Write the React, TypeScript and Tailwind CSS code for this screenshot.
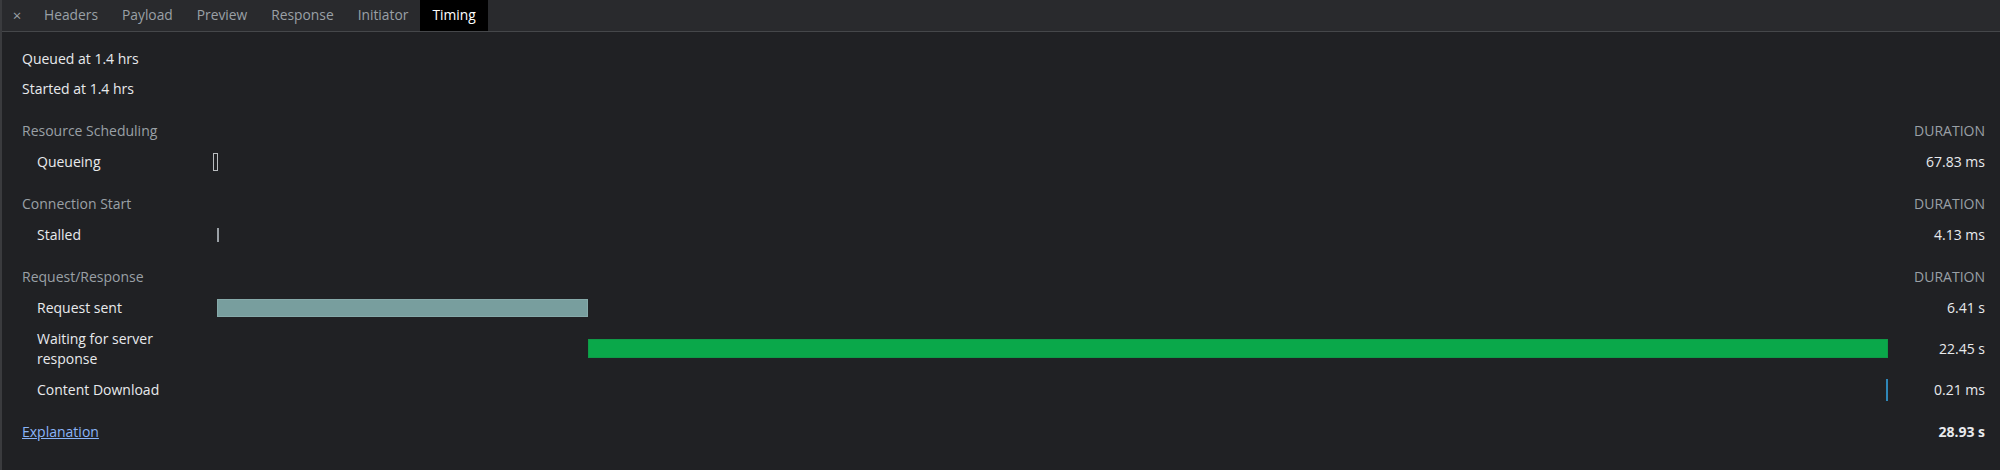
import React from "react";

const TRACK = 1675;
const TOTAL = 28.93;
const px = (s: number) => (s / TOTAL) * TRACK;

type Row = {
  label: React.ReactNode;
  start: number;
  dur: number;
  value: string;
  kind: "queue" | "stall" | "sent" | "wait" | "dl";
  tall?: boolean;
};

const sections: { title: string; rows: Row[] }[] = [
  {
    title: "Resource Scheduling",
    rows: [{ label: "Queueing", start: 0, dur: 0.06783, value: "67.83 ms", kind: "queue" }],
  },
  {
    title: "Connection Start",
    rows: [{ label: "Stalled", start: 0.06783, dur: 0.00413, value: "4.13 ms", kind: "stall" }],
  },
  {
    title: "Request/Response",
    rows: [
      { label: "Request sent", start: 0.072, dur: 6.41, value: "6.41 s", kind: "sent" },
      {
        label: (
          <>
            Waiting for server
            <br />
            response
          </>
        ),
        start: 6.482,
        dur: 22.45,
        value: "22.45 s",
        kind: "wait",
        tall: true,
      },
      { label: "Content Download", start: 28.93, dur: 0.00021, value: "0.21 ms", kind: "dl" },
    ],
  },
];

function Bar({ row }: { row: Row }) {
  const left = px(row.start);
  if (row.kind === "queue") {
    return (
      <div
        className="h-[18px] w-[5px] border border-[#b9bcbf] bg-[#202124]"
        style={{ marginLeft: left }}
      />
    );
  }
  if (row.kind === "stall") {
    return <div className="h-[14px] w-[2px] bg-[#9aa0a6]" style={{ marginLeft: left }} />;
  }
  if (row.kind === "dl") {
    return <div className="h-[22px] w-[2px] bg-[#2f87b8]" style={{ marginLeft: left - 2 }} />;
  }
  const w = px(row.dur);
  return (
    <div
      className={
        row.kind === "sent"
          ? "h-[18px] bg-[#789e9e] border border-[#86aaaa]"
          : "h-[19px] bg-[#0aa84a] border border-[#0f9a47]"
      }
      style={{ marginLeft: left, width: w }}
    />
  );
}

export default function App() {
  const tabs = ["Headers", "Payload", "Preview", "Response", "Initiator", "Timing"];
  return (
    <div
      className="w-[2000px] h-[470px] bg-[#202124] text-[#e8eaed] text-[14px] overflow-hidden border-l-2 border-[#3a3b3e]"
      style={{ fontFamily: '"Open Sans", "Noto Sans", sans-serif' }}
    >
      <div className="flex h-[32px] items-stretch bg-[#292a2d] border-b border-[#45474a] text-[13.8px]">
        <div className="w-[30px] flex items-center justify-center text-[#9aa0a6] text-[15px]">
          ×
        </div>
        {tabs.map((t) => (
          <div
            key={t}
            className={
              t === "Timing"
                ? "px-[12px] flex items-center bg-black text-white"
                : "px-[12px] flex items-center text-[#9aa0a6]"
            }
          >
            {t}
          </div>
        ))}
      </div>

      <div className="pt-[12px] pl-[20px] pr-[15px] leading-[20px]">
        <div className="h-[30px] flex items-center">Queued at 1.4 hrs</div>
        <div className="h-[30px] flex items-center">Started at 1.4 hrs</div>

        {sections.map((sec) => (
          <div key={sec.title} className="mt-[11px]">
            <div className="h-[31px] grid grid-cols-[191px_1675px_97px] items-center">
              <div className="text-[#9aa0a6]">{sec.title}</div>
              <div />
              <div className="text-right text-[#9aa0a6]">DURATION</div>
            </div>
            {sec.rows.map((r, i) => (
              <div
                key={i}
                className={
                  (r.tall ? "h-[51px]" : "h-[31px]") +
                  " grid grid-cols-[191px_1675px_97px] items-center"
                }
              >
                <div className="pl-[15px]">{r.label}</div>
                <div className="flex items-center">
                  <Bar row={r} />
                </div>
                <div className="text-right">{r.value}</div>
              </div>
            ))}
          </div>
        ))}

        <div className="mt-[11px] h-[31px] grid grid-cols-[191px_1675px_97px] items-center">
          <div>
            <a href="#" className="text-[#8ab4f8] underline">
              Explanation
            </a>
          </div>
          <div />
          <div className="text-right font-bold">28.93 s</div>
        </div>
      </div>
    </div>
  );
}
